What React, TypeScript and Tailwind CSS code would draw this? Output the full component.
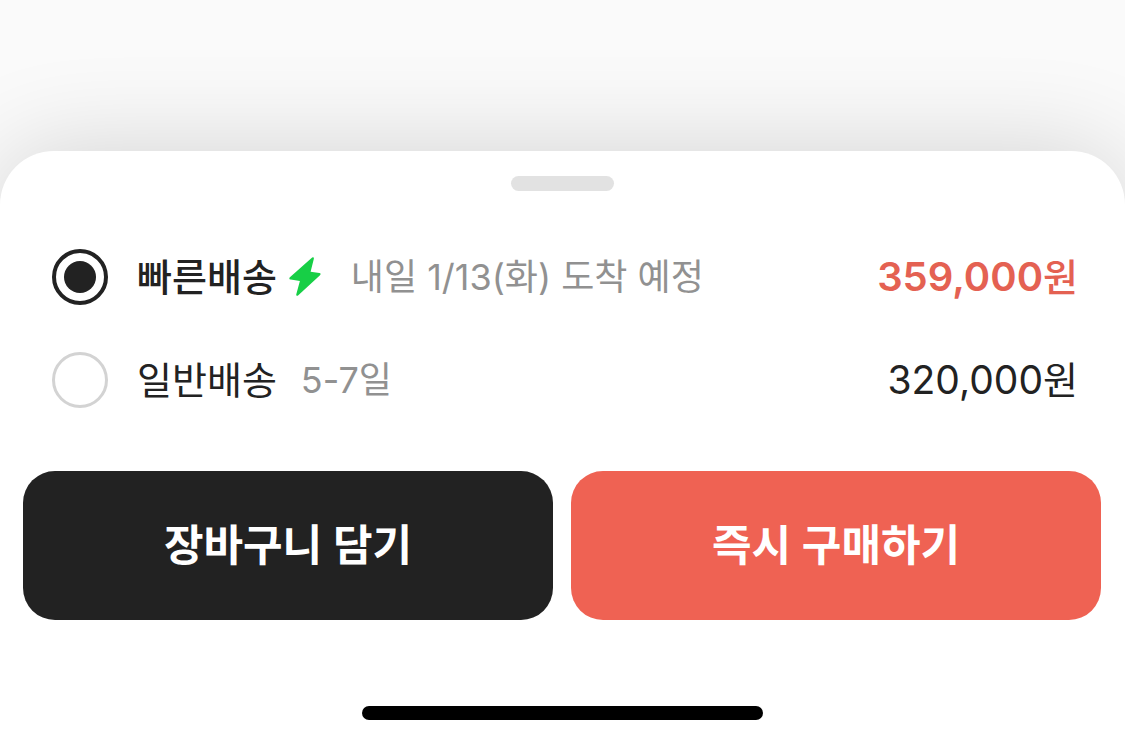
import { useState } from "react";

type Option = {
  id: string;
  name: string;
  note: string;
  amount: string;
  fast: boolean;
};

const options: Option[] = [
  { id: "fast", name: "빠른배송", note: "내일 1/13(화) 도착 예정", amount: "359,000", fast: true },
  { id: "standard", name: "일반배송", note: "5-7일", amount: "320,000", fast: false },
];

function Bolt() {
  return (
    <svg className="ml-3 h-10 w-8 shrink-0" viewBox="0 0 32 40" aria-hidden="true">
      <path
        d="M22.6.9.9 20.3c-1 1-.6 2 .8 2.3l9.2 1.3-3.6 13.3c-.4 1.6.9 2.2 2 1.1L31 18.2c1-1 .7-2-.6-2.2l-8.8-1.3L24.8 2c.5-1.5-.9-2.3-2.2-1.1Z"
        fill="#17cf46"
      />
    </svg>
  );
}

export default function App() {
  const [selected, setSelected] = useState("fast");

  return (
    <div className="flex min-h-screen flex-col overflow-hidden bg-[#fafafa] pt-[151px] font-['Inter','Noto_Sans_CJK_KR',sans-serif]">
      <main className="flex grow flex-col rounded-t-[54px] bg-white pt-[25px] shadow-[0_0_100px_rgba(0,0,0,0.16)]">
        <div className="h-[15px] w-[103px] self-center rounded-full bg-[#e2e2e2]" />

        <div role="radiogroup" aria-label="배송 방법" className="mt-[58px] flex flex-col gap-[47px] pr-[47px] pl-[52px]">
          {options.map((o) => (
            <label key={o.id} className="flex h-14 cursor-pointer items-center whitespace-nowrap text-[38px] leading-14 text-[#222]">
              <input
                type="radio"
                name="shipping"
                value={o.id}
                checked={selected === o.id}
                onChange={() => setSelected(o.id)}
                className="mr-[29px] size-14 shrink-0 appearance-none rounded-full border-3 border-[#d3d3d3] bg-clip-content p-2 checked:border-[#222] checked:border-4 checked:bg-[#222]"
              />
              <span className={o.fast ? "font-medium" : "font-normal"}>{o.name}</span>
              {o.fast && <Bolt />}
              <span className={o.fast ? "ml-[30px] text-[36px] text-[#919191]" : "ml-6 text-[36px] text-[#919191]"}>{o.note}</span>
              <span className={o.fast ? "ml-auto flex items-baseline font-medium text-[#e46152]" : "ml-auto flex items-baseline"}>
                <span className={o.fast ? "text-[40px] font-semibold" : "text-[39px]"}>{o.amount}</span>원
              </span>
            </label>
          ))}
        </div>

        <div className="mt-[63px] grid grid-cols-2 gap-[18px] pr-6 pl-[23px] text-[43px] font-semibold text-white">
          <button type="button" className="h-[149px] rounded-[32px] bg-[#222]">
            장바구니 담기
          </button>
          <button type="button" className="h-[149px] rounded-[32px] bg-[#ef6253]">
            즉시 구매하기
          </button>
        </div>

        <div className="mt-[86px] mb-[23px] h-[14px] w-[401px] self-center rounded-full bg-black" />
      </main>
    </div>
  );
}
